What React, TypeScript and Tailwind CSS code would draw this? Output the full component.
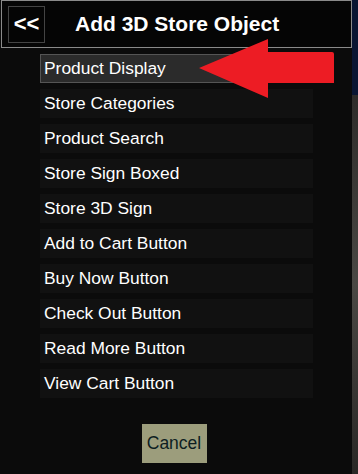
const items = [
  "Product Display",
  "Store Categories",
  "Product Search",
  "Store Sign Boxed",
  "Store 3D Sign",
  "Add to Cart Button",
  "Buy Now Button",
  "Check Out Button",
  "Read More Button",
  "View Cart Button",
]

export default function App() {
  return (
    <div
      className="relative flex h-[474px] w-[358px] overflow-hidden bg-[#0b0b0b]"
      style={{ fontFamily: '"Liberation Sans", Arial, sans-serif' }}
    >
      <div className="flex w-[352px] flex-col">
        <div className="ml-[1px] flex h-[48px] items-center border border-[#8a8a8a] bg-[#050505]">
          <button className="ml-[6px] flex h-[37px] w-[37px] items-center justify-center border border-[#444] text-[22px] font-bold leading-none text-white">
            &lt;&lt;
          </button>
          <h1 className="ml-[30px] text-[21px] font-bold text-white">Add 3D Store Object</h1>
        </div>

        <ul className="ml-[40px] mt-[6px] flex w-[273px] flex-col gap-[6px]">
          {items.map((item, i) => (
            <li
              key={item}
              className={
                i === 0
                  ? "flex h-[29px] items-center border border-[#555] bg-[#2b2b2b] pl-[3px] text-[17.4px] text-white"
                  : "flex h-[29px] items-center bg-[#111111] pl-[4px] text-[17.4px] text-white"
              }
            >
              {item}
            </li>
          ))}
        </ul>

        <div className="mt-[26px] flex justify-center pr-[4px]">
          <button className="h-[39px] w-[65px] bg-[#9c9d7c] text-[17.5px] text-[#0d1d22]">Cancel</button>
        </div>
      </div>

      <div className="flex w-[6px] flex-col">
        <div className="h-[95px] bg-[#0a1633]" />
        <div className="flex-1 bg-gradient-to-b from-[#2e2c2a] via-[#4a4844] to-[#2a2826]" />
      </div>

      <svg className="absolute left-0 top-0" width="358" height="474" viewBox="0 0 358 474">
        <path d="M199 68 L268 39 L268 52 L332 52 Q334 52 334 54 L334 83 L268 83 L268 98 Z" fill="#ed1c24" />
      </svg>
    </div>
  )
}
